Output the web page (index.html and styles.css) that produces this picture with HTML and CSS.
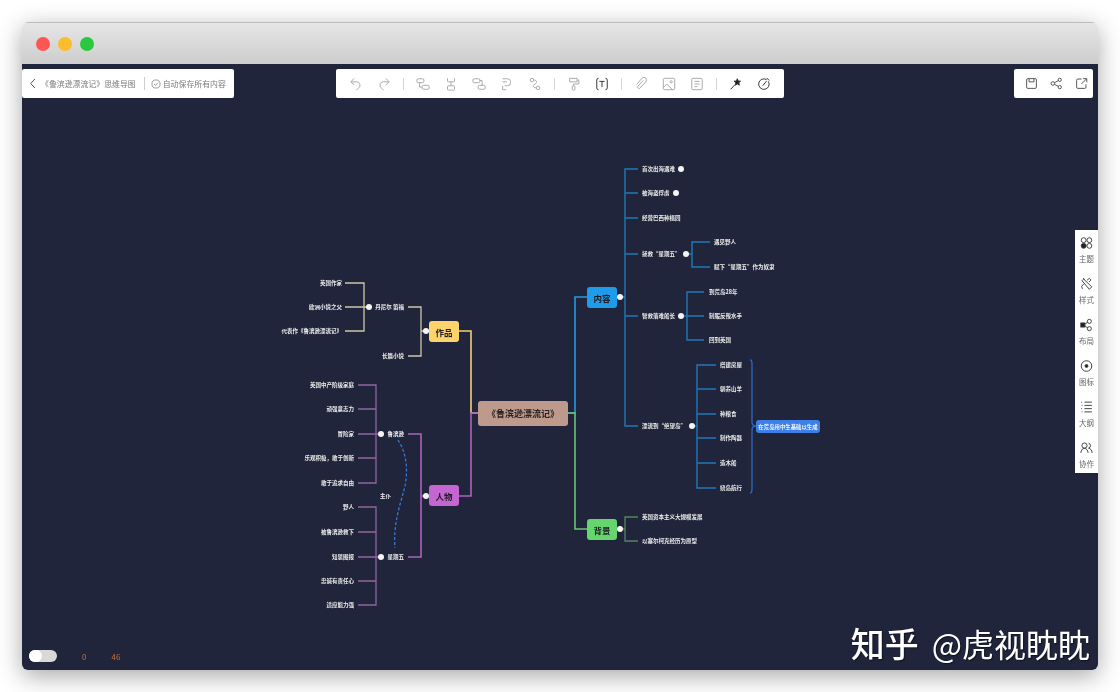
FILE: index.html
```html
<!DOCTYPE html>
<html lang="zh-CN">
<head>
    <meta charset="UTF-8">
    <title>《鲁滨逊漂流记》思维导图</title>
    <link rel="stylesheet" href="styles.css">
</head>
<body>
<div class="window">
    <div class="titlebar">
        <span class="light red"></span>
        <span class="light yellow"></span>
        <span class="light green"></span>
    </div>
    <div class="canvas">
        <!-- mind map, drawn in page coordinates -->
        <svg class="map" viewBox="22 64 1076 606">
            <g class="ln">
                <path class="yellow-main" d="M478 413H471V331H459"/>
                <path class="purple-main" d="M478 413H471V496H459"/>
                <path class="blue-main" d="M568 413H575V297H587"/>
                <path class="green-main" d="M568 413H575V529H587"/>

                <path class="tan" d="M429 331H421M408 307H421V356H408"/>
                <path class="tan" d="M372 307H345M345 283H364V331H345"/>

                <path class="purple-main" d="M429 496H421M408 434H421V557H408"/>
                <path class="purple" d="M384 434H358M358 385H376V483H358M358 409H376M358 458H376"/>
                <path class="purple" d="M384 557H358M358 507H376V605H358M358 532H376M358 581H376"/>

                <path class="blue-main" d="M617 297H625"/>
                <path class="blue" d="M638 169H625V426H638M625 193H638M625 218H638M625 254H638M625 316H638"/>
                <path class="blue" d="M686 254H692M710 242H692V267H710"/>
                <path class="blue" d="M681 316H704M704 292H687V340H704"/>
                <path class="blue" d="M692 426H697M716 365H697V488H716M697 389H716M697 414H716M697 438H716M697 463H716"/>
                <path class="blue-brace" d="M750 360Q752 360 752 364V422Q752 426 756 426Q752 426 752 430V489Q752 493 750 493"/>

                <path class="moss" d="M620 529H625M638 517H625V541H638"/>
                <path class="dash" d="M398 440C408 455 408 475 404 490C400 505 393 525 395 548"/>
            </g>

            <g class="dots">
                <circle cx="426" cy="331" r="3"/>
                <circle cx="369" cy="307" r="3"/>
                <circle cx="426" cy="496" r="3"/>
                <circle cx="381" cy="434" r="3"/>
                <circle cx="381" cy="557" r="3"/>
                <circle cx="620" cy="297" r="3"/>
                <circle cx="620" cy="529" r="3"/>
                <circle cx="681" cy="169" r="3"/>
                <circle cx="676" cy="193" r="3"/>
                <circle cx="686" cy="254" r="3"/>
                <circle cx="681" cy="316" r="3"/>
                <circle cx="692" cy="426" r="3"/>
            </g>

            <rect class="box root" x="478" y="401" width="90" height="25" rx="3"/>
            <rect class="box zuopin" x="429" y="321" width="30" height="21" rx="3"/>
            <rect class="box renwu" x="429" y="485" width="30" height="21" rx="3"/>
            <rect class="box neirong" x="587" y="287" width="30" height="21" rx="3"/>
            <rect class="box beijing" x="587" y="519" width="30" height="21" rx="3"/>
            <rect class="box tag" x="756" y="420" width="64" height="13" rx="3"/>

            <text class="title" x="523" y="413.5">《鲁滨逊漂流记》</text>
            <text class="head" x="444" y="331.5">作品</text>
            <text class="head" x="444" y="495.5">人物</text>
            <text class="head" x="602" y="297.5">内容</text>
            <text class="head" x="602" y="529.5">背景</text>
            <text class="tag-text" x="788" y="426.5">在荒岛用中生基础以生成</text>

            <g class="label to-left">
                <text x="342" y="283">英国作家</text>
                <text x="342" y="307">欧洲小说之父</text>
                <text x="342" y="331">代表作《鲁滨逊漂流记》</text>
                <text x="404" y="307">丹尼尔 笛福</text>
                <text x="404" y="356">长篇小说</text>
                <text x="404" y="434">鲁滨逊</text>
                <text x="404" y="557">星期五</text>
                <text x="354" y="385">英国中产阶级家庭</text>
                <text x="354" y="409">顽强意志力</text>
                <text x="354" y="434">冒险家</text>
                <text x="354" y="458">乐观积极，敢于创新</text>
                <text x="354" y="483">敢于追求自由</text>
                <text x="354" y="507">野人</text>
                <text x="354" y="532">被鲁滨逊救下</text>
                <text x="354" y="557">知恩图报</text>
                <text x="354" y="581">忠诚有责任心</text>
                <text x="354" y="605">适应能力强</text>
                <text x="391" y="496">主仆</text>
            </g>
            <g class="label">
                <text x="642" y="169">首次出海遇难</text>
                <text x="642" y="193">被海盗俘虏</text>
                <text x="642" y="218">经营巴西种植园</text>
                <text x="642" y="254">拯救“星期五”</text>
                <text x="642" y="316">智救落难船长</text>
                <text x="642" y="426">漂流到“绝望岛”</text>
                <text x="714" y="242">遇见野人</text>
                <text x="714" y="267">赋下“星期五”作为奴隶</text>
                <text x="709" y="292">到荒岛28年</text>
                <text x="709" y="316">制服反叛水手</text>
                <text x="709" y="340">回到英国</text>
                <text x="720" y="365">搭建房屋</text>
                <text x="720" y="389">驯养山羊</text>
                <text x="720" y="414">种粮食</text>
                <text x="720" y="438">制作陶器</text>
                <text x="720" y="463">造木船</text>
                <text x="720" y="488">绕岛航行</text>
                <text x="642" y="517">英国资本主义大规模发展</text>
                <text x="642" y="541">以塞尔柯克经历为原型</text>
            </g>
        </svg>

        <div class="topbar">
            <div class="panel panel-title">
                <svg class="chevron" viewBox="0 0 8 14"><path d="M6.5 1L1 7l5.5 6"/></svg>
                <span>《鲁滨逊漂流记》思维导图</span>
                <i class="panel-sep"></i>
                <svg class="ico-small" viewBox="0 0 16 16"><circle cx="8" cy="8" r="6.5"/><path d="M5 8l2.3 2.3L11 6"/></svg>
                <span>自动保存所有内容</span>
            </div>
            <div class="panel panel-tools">
                <span class="tool"><svg viewBox="0 0 16 16"><path d="M6 1.5L2 5.500l4 3.500M2.500 5.500h6a4 4 0 0 1 2 7.500L8.500 15"/></svg></span>
                <span class="tool"><svg viewBox="0 0 16 16"><path d="M10 1.500l4 4-4 3.500M13.500 5.500h-6a4 4 0 0 0-2 7.500L7.500 15"/></svg></span>
                <i class="tool-sep"></i>
                <span class="tool"><svg viewBox="0 0 16 16"><rect x="1" y="2" width="8" height="4.500" rx="1.500"/><rect x="7" y="9.500" width="8" height="4.500" rx="1.500"/><path d="M4 6.500v5h3"/></svg></span>
                <span class="tool"><svg viewBox="0 0 16 16"><path d="M4 1.500v3a1 1 0 0 0 1 1h6a1 1 0 0 0 1-1v-3"/><rect x="4" y="10" width="8" height="5" rx="1"/><path d="M8 5.500V10"/></svg></span>
                <span class="tool"><svg viewBox="0 0 16 16"><rect x="1" y="2" width="8" height="4.500" rx="1.500"/><rect x="7" y="9.500" width="8" height="4.500" rx="1.500"/><path d="M9 4h2.500v5.500"/></svg></span>
                <span class="tool"><svg viewBox="0 0 16 16"><path d="M3 2h5.500a3.500 3.500 0 0 1 3.500 3.500v1a3.500 3.500 0 0 1-3.500 3.500H5.500M3 5.500h5M3 10v4.500h4"/></svg></span>
                <span class="tool"><svg viewBox="0 0 16 16"><circle cx="4.500" cy="3.500" r="2"/><circle cx="11.500" cy="12.500" r="2"/><path d="M6.500 3.500c4 0 4 3 1.500 4.500s-3 4 1.500 4.500"/></svg></span>
                <i class="tool-sep"></i>
                <span class="tool"><svg viewBox="0 0 16 16"><path d="M3 1.500h8.500v4H3zM11.500 3.500h2v4.500H7.500v2"/><rect x="6" y="10" width="3" height="5" rx="1"/></svg></span>
                <span class="tool dark"><svg viewBox="0 0 16 16"><path d="M4 1.500Q2 1.500 2 3.500v9Q2 14.500 4 14.500M12 1.500Q14 1.500 14 3.500v9Q14 14.500 12 14.500M5 5h6M8 5v6.500"/></svg></span>
                <i class="tool-sep"></i>
                <span class="tool"><svg viewBox="0 0 16 16"><path d="M10.500 4L4.500 10.500a1.500 1.500 0 0 0 2.500 2l6.500-7a3 3 0 0 0-4.500-4L3 8.500"/></svg></span>
                <span class="tool"><svg viewBox="0 0 16 16"><rect x="1.500" y="1.500" width="13" height="13" rx="1.500"/><circle cx="10.500" cy="5.500" r="1.300"/><path d="M1.500 12l4-4 6.500 6.500"/></svg></span>
                <span class="tool"><svg viewBox="0 0 16 16"><rect x="2" y="1.500" width="12" height="13" rx="1.500"/><path d="M5 5h6M5 8h6M5 11h3.500"/></svg></span>
                <i class="tool-sep"></i>
                <span class="tool dark"><svg viewBox="0 0 16 16"><path class="solid" d="M9.500 2l1 2.500 2.700.3-2 1.800.6 2.700L9.500 7.900 7.200 9.300l.6-2.700-2-1.800 2.700-.3z"/><path d="M7 8.500L2 14"/></svg></span>
                <span class="tool dark"><svg viewBox="0 0 16 16"><path d="M13 5a6 6 0 1 1-2-2"/><path d="M6.500 10l4.500-5.500M11 1l3 3"/></svg></span>
            </div>
            <div class="panel panel-share">
                <svg viewBox="0 0 16 16"><rect x="2" y="2" width="12" height="12" rx="1.500"/><path d="M5 2v4h6V2"/></svg>
                <svg viewBox="0 0 16 16"><circle cx="3.500" cy="8" r="2.200"/><circle cx="12" cy="3.500" r="2"/><circle cx="12" cy="12.500" r="2"/><path d="M5.500 7l4.700-2.500M5.500 9l4.700 2.500"/></svg>
                <svg viewBox="0 0 16 16"><path d="M8 2.500H3.500a1.500 1.500 0 0 0-1.500 1.500v8.500A1.500 1.500 0 0 0 3.500 14H12a1.500 1.500 0 0 0 1.500-1.500V9M8 8.500L14 2.500M10 2h4.500v4.500"/></svg>
            </div>
        </div>

        <div class="sidebar">
            <div class="side-item">
                <svg viewBox="0 0 16 16"><circle cx="4.500" cy="4.500" r="3"/><circle cx="11.500" cy="4.500" r="3"/><circle class="solid" cx="4.500" cy="11.500" r="3"/><circle cx="11.500" cy="11.500" r="3"/></svg>
                <span>主题</span>
            </div>
            <div class="side-item">
                <svg viewBox="0 0 16 16"><path d="M2.500 4l2-2 10 9.500-3 3zM6 2.500L4 1M8.500 3.500l3-2.500 2 2-2.500 2.500M4.500 8L2 11l1 3"/></svg>
                <span>样式</span>
            </div>
            <div class="side-item">
                <svg viewBox="0 0 16 16"><rect class="solid" x="1" y="5.500" width="5" height="5"/><circle cx="11.500" cy="3.500" r="2.500"/><circle cx="11.500" cy="12.500" r="2.500"/><path d="M6 7l3.500-2.500M6 9l3.500 2.500"/></svg>
                <span>布局</span>
            </div>
            <div class="side-item">
                <svg viewBox="0 0 16 16"><circle cx="8" cy="8" r="6.500"/><circle class="solid" cx="8" cy="8" r="1.800"/></svg>
                <span>图标</span>
            </div>
            <div class="side-item">
                <svg viewBox="0 0 16 16"><path d="M5.500 2h9M5.500 6h9M5.500 10h9M5.500 14h9M1.500 2h1M2 6h1M1.500 10h1M2 14h1"/></svg>
                <span>大纲</span>
            </div>
            <div class="side-item">
                <svg viewBox="0 0 16 16"><circle cx="5.500" cy="5" r="3.200"/><path d="M1 14c.5-3.500 2-5.500 4.500-5.500S9.500 10.500 10 14M10.500 2a3.200 3.200 0 0 1 0 6.200c2.500.5 4 2.500 4.500 5.800"/></svg>
                <span>协作</span>
            </div>
        </div>

        <div class="status">
            <span class="toggle"><i></i></span>
            <span class="count first">0</span>
            <span class="count">46</span>
        </div>

        <div class="watermark"><span class="zhihu">知乎</span><span class="author">@虎视眈眈</span></div>
    </div>
</div>
</body>
</html>
```
FILE: styles.css
```css
html, body {
    margin: 0;
    padding: 0;
    height: 100%;
    overflow: hidden;
    background-color: #fff;
}

body {
    padding: 22px 0 0 22px;
    box-sizing: border-box;
    font-family: "Noto Sans CJK SC", "Noto Sans", sans-serif;
}

.window {
    width: 1076px;
    height: 648px;
    display: flex;
    flex-direction: column;
    border-radius: 6px;
    overflow: hidden;
    box-shadow: 0 6px 24px rgba(0, 0, 0, .35);
}

.titlebar {
    height: 42px;
    flex: none;
    display: flex;
    align-items: center;
    gap: 8px;
    padding-left: 14px;
    box-sizing: border-box;
    background: linear-gradient(#e6e6e6, #cdcdcd);
    border-top: 1px solid #bdbdbd;
}

.light {
    width: 14px;
    height: 14px;
    border-radius: 50%;
}

.light.red {
    background-color: #fc5753;
}

.light.yellow {
    background-color: #fdbc2c;
}

.light.green {
    background-color: #2ac840;
}

.canvas {
    flex: 1;
    position: relative;
    background-color: #21253b;
    filter: blur(.3px);
}

.map {
    position: absolute;
    left: 0;
    top: 0;
    width: 1076px;
    height: 606px;
}

.ln path {
    fill: none;
    stroke-width: 1.6;
}

.yellow-main {
    stroke: #f0d077;
}

.purple-main {
    stroke: #ac62bd;
}

.blue-main {
    stroke: #2499e4;
}

.green-main {
    stroke: #6cc474;
}

.ln .tan {
    stroke: #cfc6a8;
    stroke-width: 1.3;
}

.ln .purple {
    stroke: #8f65a2;
    stroke-width: 1.3;
}

.ln .blue {
    stroke: #1f7ab8;
    stroke-width: 1.4;
}

.ln .blue-brace {
    stroke: #2f68c2;
    stroke-width: 1.3;
}

.ln .moss {
    stroke: #548561;
    stroke-width: 1.3;
}

.ln .dash {
    stroke: #3a7de0;
    stroke-width: 1.2;
    stroke-dasharray: 3 2;
}

.dots circle {
    fill: #f4f4f4;
}

.root {
    fill: #bd9a8b;
}

.zuopin {
    fill: #fdd36b;
}

.renwu {
    fill: #c565d2;
}

.neirong {
    fill: #1e9be9;
}

.beijing {
    fill: #65d56d;
}

.tag {
    fill: #3d7fe6;
}

.map text {
    dominant-baseline: central;
}

.title {
    font-size: 9px;
    font-weight: 700;
    text-anchor: middle;
    fill: #2b2323;
}

.head {
    font-size: 8.5px;
    font-weight: 700;
    text-anchor: middle;
    fill: #1f1b25;
}

.tag-text {
    font-size: 5.4px;
    font-weight: 700;
    text-anchor: middle;
    fill: #eef4ff;
}

.label text {
    font-size: 5.5px;
    font-weight: 700;
    fill: #ececec;
}

.to-left text {
    text-anchor: end;
}

.topbar {
    position: relative;
    display: flex;
    padding-top: 5px;
}

.panel {
    height: 29px;
    display: flex;
    align-items: center;
    background-color: #fff;
    border-radius: 2px;
}

.panel svg {
    fill: none;
    stroke: currentColor;
}

.panel-title {
    width: 212px;
    box-sizing: border-box;
    padding-left: 8px;
    font-size: 7.9px;
    color: #7a7a7a;
    white-space: nowrap;
}

.chevron {
    width: 6px;
    height: 11px;
    margin-right: 5px;
    color: #444;
    stroke-width: 1.2;
}

.panel-sep {
    width: 1px;
    height: 13px;
    margin: 0 6px 0 8px;
    background-color: #ccc;
}

.ico-small {
    width: 10px;
    height: 10px;
    margin-right: 2px;
    color: #666;
}

.panel-tools {
    width: 448px;
    box-sizing: border-box;
    margin-left: 102px;
    padding: 0 0 0 6px;
    color: #a8a8a8;
}

.tool {
    width: 28px;
    height: 14px;
    display: flex;
    justify-content: center;
}

.tool svg {
    width: 14px;
    height: 14px;
    stroke-width: 1.1;
}

.tool.dark {
    color: #333;
}

.tool .solid {
    fill: #222;
}

.tool-sep {
    width: 11px;
    display: flex;
    justify-content: center;
}

.tool-sep::after {
    content: "";
    width: 1px;
    height: 12px;
    background-color: #d5d5d5;
}

.panel-share {
    width: 79px;
    box-sizing: border-box;
    margin-left: 230px;
    padding-left: 11px;
    gap: 12px;
    color: #555;
}

.panel-share svg {
    width: 13px;
    height: 13px;
    stroke-width: 1.2;
}

.sidebar {
    position: absolute;
    right: 0;
    top: 166px;
    width: 23px;
    height: 243px;
    box-sizing: border-box;
    padding-top: 6px;
    background-color: #fff;
    display: flex;
    flex-direction: column;
    align-items: center;
}

.side-item {
    height: 41px;
    flex: none;
    display: flex;
    flex-direction: column;
    align-items: center;
    gap: 4px;
    font-size: 7.5px;
    line-height: 9px;
    color: #666;
}

.side-item svg {
    width: 13px;
    height: 14px;
    fill: none;
    stroke: #333;
    stroke-width: 1.1;
}

.side-item .solid {
    fill: #222;
}

.status {
    position: absolute;
    left: 7px;
    bottom: 8px;
    display: flex;
    align-items: center;
    font-size: 8px;
    color: #c8703f;
}

.toggle {
    width: 28px;
    height: 12px;
    display: block;
    border-radius: 6px;
    background-color: #d8d8d8;
}

.toggle i {
    width: 13px;
    height: 12px;
    display: block;
    border-radius: 6px;
    background-color: #fff;
}

.count.first {
    margin-left: 25px;
}

.count + .count {
    margin-left: 25px;
}

.watermark {
    position: absolute;
    right: 8px;
    bottom: 5px;
    display: flex;
    align-items: baseline;
    color: #fff;
    line-height: 44px;
    text-shadow: 1px 1px 1px rgba(0, 0, 0, .5);
    white-space: nowrap;
}

.zhihu {
    font-size: 34px;
    font-weight: 500;
    margin-right: 13px;
}

.author {
    font-size: 32px;
}
```
